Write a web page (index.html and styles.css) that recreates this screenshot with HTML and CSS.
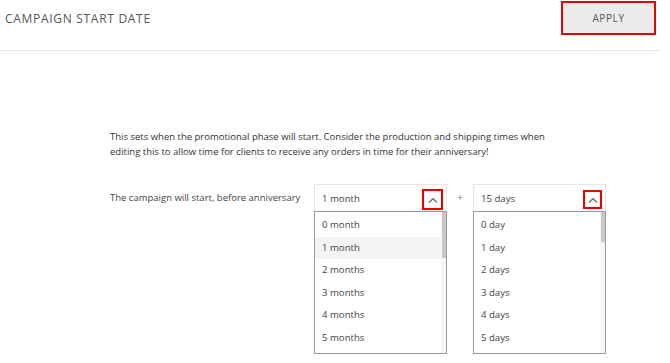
FILE: index.html
```html
<!DOCTYPE html>
<html lang="en">
<head>
  <meta charset="UTF-8" />
  <title>Campaign start date</title>
  <link rel="stylesheet" href="styles.css">
</head>
<body>
  <div class="header">
    <h1 class="title">CAMPAIGN START DATE</h1>
    <button class="apply">APPLY</button>
  </div>
  <div class="content">
    <p class="intro">This sets when the promotional phase will start. Consider the production and shipping times when editing this to allow time for clients to receive any orders in time for their anniversary!</p>
    <div class="row">
      <div class="label">The campaign will start, before anniversary</div>
      <div class="select">
        <div class="current"><span>1 month</span><span class="arrow"><svg width="10" height="6" viewBox="0 0 10 6"><path d="M1 5.5L5 1.5L9 5.5" fill="none" stroke="#666" stroke-width="1.2"/></svg></span></div>
        <div class="list">
          <div class="item">0 month</div>
          <div class="item active">1 month</div>
          <div class="item">2 months</div>
          <div class="item">3 months</div>
          <div class="item">4 months</div>
          <div class="item">5 months</div>
          <div class="scroll"><div class="thumb months"></div></div>
        </div>
      </div>
      <div class="plus">+</div>
      <div class="select">
        <div class="current"><span>15 days</span><span class="arrow small"><svg width="10" height="6" viewBox="0 0 10 6"><path d="M1 5.5L5 1.5L9 5.5" fill="none" stroke="#666" stroke-width="1.2"/></svg></span></div>
        <div class="list">
          <div class="item">0 day</div>
          <div class="item">1 day</div>
          <div class="item">2 days</div>
          <div class="item">3 days</div>
          <div class="item">4 days</div>
          <div class="item">5 days</div>
          <div class="scroll"><div class="thumb days"></div></div>
        </div>
      </div>
    </div>
  </div>
</body>
</html>
```

FILE: styles.css
```css
body {
  margin: 0;
  min-height: 363px;
  background: #fff;
  font-family: "Open Sans", sans-serif;
  color: #444;
}
.header {
  width: 660px;
  height: 50px;
  border-bottom: 1px solid #e3e3e3;
  display: flex;
  justify-content: space-between;
  align-items: flex-start;
}
.title {
  margin: 10px 0 0 5px;
  font-size: 12px;
  font-weight: 400;
  letter-spacing: 0.7px;
  color: #555;
}
.apply {
  margin: 1px 4px 0 0;
  width: 95px;
  height: 34px;
  background: #ebebeb;
  border: 2px solid #ee0000;
  font-family: "Open Sans", sans-serif;
  font-size: 10px;
  letter-spacing: 0.6px;
  color: #555;
  padding: 0;
}
.content {
  padding: 78px 0 0 110px;
}
.intro {
  margin: 0;
  width: 440px;
  font-size: 9.5px;
  line-height: 15px;
  color: #333;
}
.row {
  display: flex;
  align-items: flex-start;
  margin-top: 25px;
}
.label {
  width: 204px;
  white-space: nowrap;
  font-size: 9.5px;
  line-height: 28px;
  color: #444;
}
.select {
  position: relative;
  width: 133px;
}
.current {
  height: 27px;
  border: 1px solid #e6e6e6;
  border-bottom: none;
  display: flex;
  justify-content: space-between;
  align-items: center;
  padding: 0 3px 0 7px;
  font-size: 9.6px;
  color: #444;
}
.arrow {
  width: 17px;
  height: 17px;
  border: 2px solid #ee0000;
  display: flex;
  justify-content: center;
  align-items: center;
  margin-top: 2px;
}
.arrow.small {
  width: 15px;
  height: 15px;
}
.plus {
  width: 26px;
  text-align: center;
  font-size: 9px;
  line-height: 28px;
  color: #666;
}
.list {
  position: absolute;
  top: 27px;
  left: 0;
  width: 131px;
  height: 139px;
  border: 1px solid #9a9a9a;
  background: #fff;
  padding-top: 2px;
  box-sizing: content-box;
}
.item {
  height: 22.5px;
  line-height: 22.5px;
  padding-left: 7px;
  font-size: 9.6px;
  color: #444;
  margin-right: 5px;
}
.item.active {
  background: #f4f4f4;
}
.scroll {
  position: absolute;
  top: 0;
  right: 0;
  width: 5px;
  height: 100%;
  background: #f5f5f5;
}
.thumb {
  width: 4px;
  margin-left: 1px;
  background: #c8c8c8;
}
.thumb.months {
  height: 46px;
}
.thumb.days {
  height: 30px;
}
```
